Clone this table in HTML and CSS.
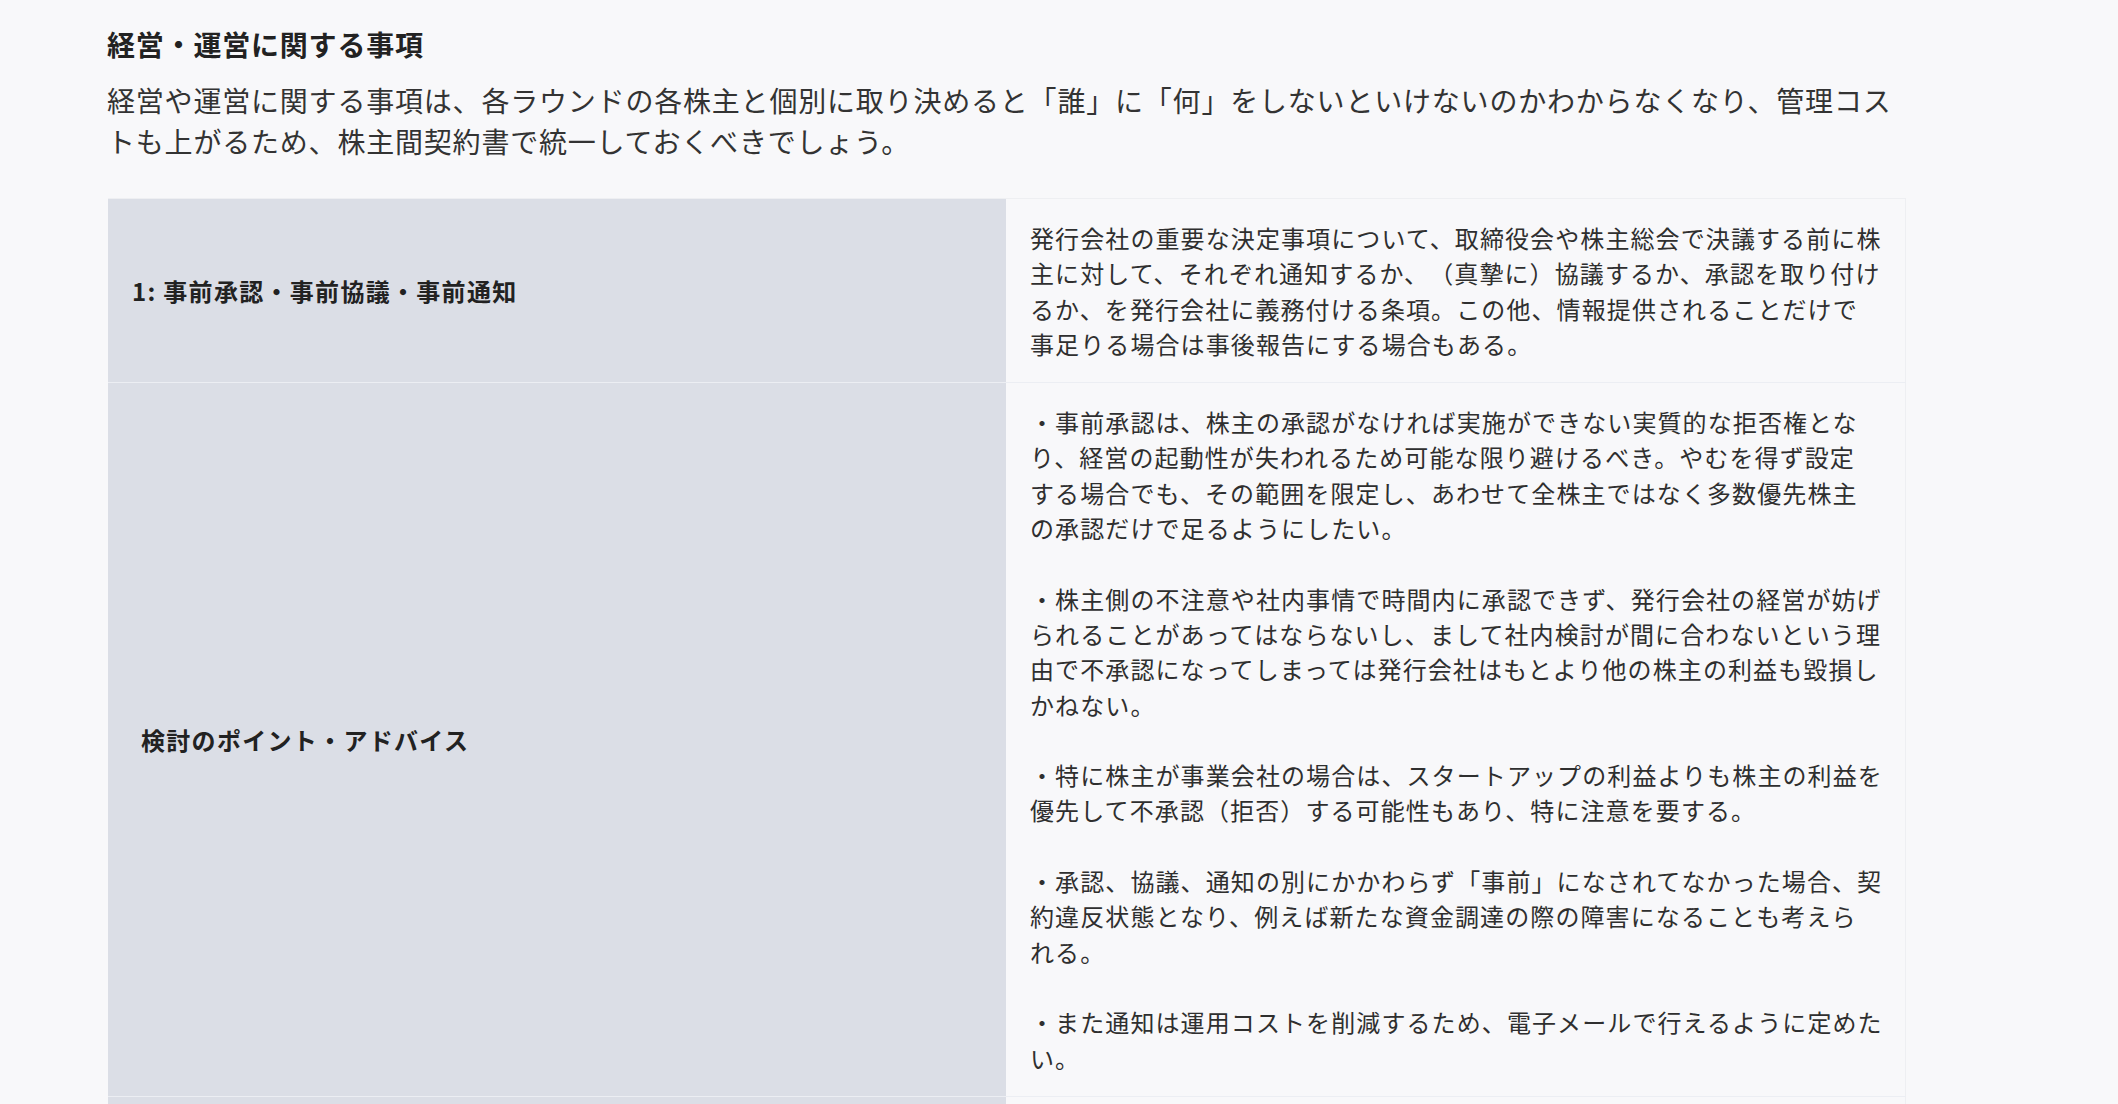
FILE: index.html
```html
<!DOCTYPE html>
<html lang="ja">
<head>
<meta charset="utf-8">
<title>経営・運営に関する事項</title>
<link rel="stylesheet" href="styles.css">
</head>
<body>
<main class="page">
  <h2 class="section-title">経営・運営に関する事項</h2>
  <p class="lead">経営や運営に関する事項は、各ラウンドの各株主と個別に取り決めると「誰」に「何」をしないといけないのかわからなくなり、管理コス<br>トも上がるため、株主間契約書で統一しておくべきでしょう。</p>

  <div class="terms">
    <div class="term-row">
      <div class="term-label">1: 事前承認・事前協議・事前通知</div>
      <div class="term-body">発行会社の重要な決定事項について、取締役会や株主総会で決議する前に株<br>主に対して、それぞれ通知するか、（真摯に）協議するか、承認を取り付け<br>るか、を発行会社に義務付ける条項。この他、情報提供されることだけで<br>事足りる場合は事後報告にする場合もある。</div>
    </div>
    <div class="term-row">
      <div class="term-label term-label-indent">検討のポイント・アドバイス</div>
      <div class="term-body">・事前承認は、株主の承認がなければ実施ができない実質的な拒否権とな<br>り、経営の起動性が失われるため可能な限り避けるべき。やむを得ず設定<br>する場合でも、その範囲を限定し、あわせて全株主ではなく多数優先株主<br>の承認だけで足るようにしたい。<br><br>・株主側の不注意や社内事情で時間内に承認できず、発行会社の経営が妨げ<br>られることがあってはならないし、まして社内検討が間に合わないという理<br>由で不承認になってしまっては発行会社はもとより他の株主の利益も毀損し<br>かねない。<br><br>・特に株主が事業会社の場合は、スタートアップの利益よりも株主の利益を<br>優先して不承認（拒否）する可能性もあり、特に注意を要する。<br><br>・承認、協議、通知の別にかかわらず「事前」になされてなかった場合、契<br>約違反状態となり、例えば新たな資金調達の際の障害になることも考えら<br>れる。<br><br>・また通知は運用コストを削減するため、電子メールで行えるように定めた<br>い。</div>
    </div>
    <div class="term-row">
      <div class="term-label">&nbsp;</div>
      <div class="term-body">&nbsp;</div>
    </div>
  </div>
</main>
</body>
</html>
```

FILE: styles.css
```css
html, body {
  margin: 0;
  padding: 0;
}

body {
  background: #f8f8fa;
  color: #333333;
  font-family: "Noto Sans CJK JP", "Noto Sans", sans-serif;
  text-spacing-trim: space-all;
}

.page {
  width: 1798px;
  padding: 24px 0 0 108px;
}

.section-title {
  margin: 0;
  font-size: 28px;
  line-height: 40px;
  font-weight: 700;
  letter-spacing: 0.8px;
  color: #222222;
  margin-left: -1px;
}

.lead {
  margin: 16px 0 0 -1px;
  font-size: 28px;
  line-height: 41px;
  letter-spacing: 0.8px;
  color: #333333;
}

.terms {
  margin-top: 36px;
  border-top: 1px solid #eeeff2;
}

.term-row {
  display: grid;
  grid-template-columns: 898px 900px;
  border-bottom: 1px solid #eceef3;
}

.term-label {
  background: #dbdee6;
  display: flex;
  align-items: center;
  padding: 0 24px;
  font-size: 24px;
  font-weight: 700;
  letter-spacing: 1.3px;
  color: #222222;
}

.term-label-indent {
  padding-left: 33px;
}

.term-body {
  background: #f8f8fa;
  border-right: 1px solid #eeeff2;
  padding: 21px 16px 21px 24px;
  font-size: 24px;
  line-height: 35.3px;
  letter-spacing: 1.1px;
  color: #2f2f2f;
}
```
